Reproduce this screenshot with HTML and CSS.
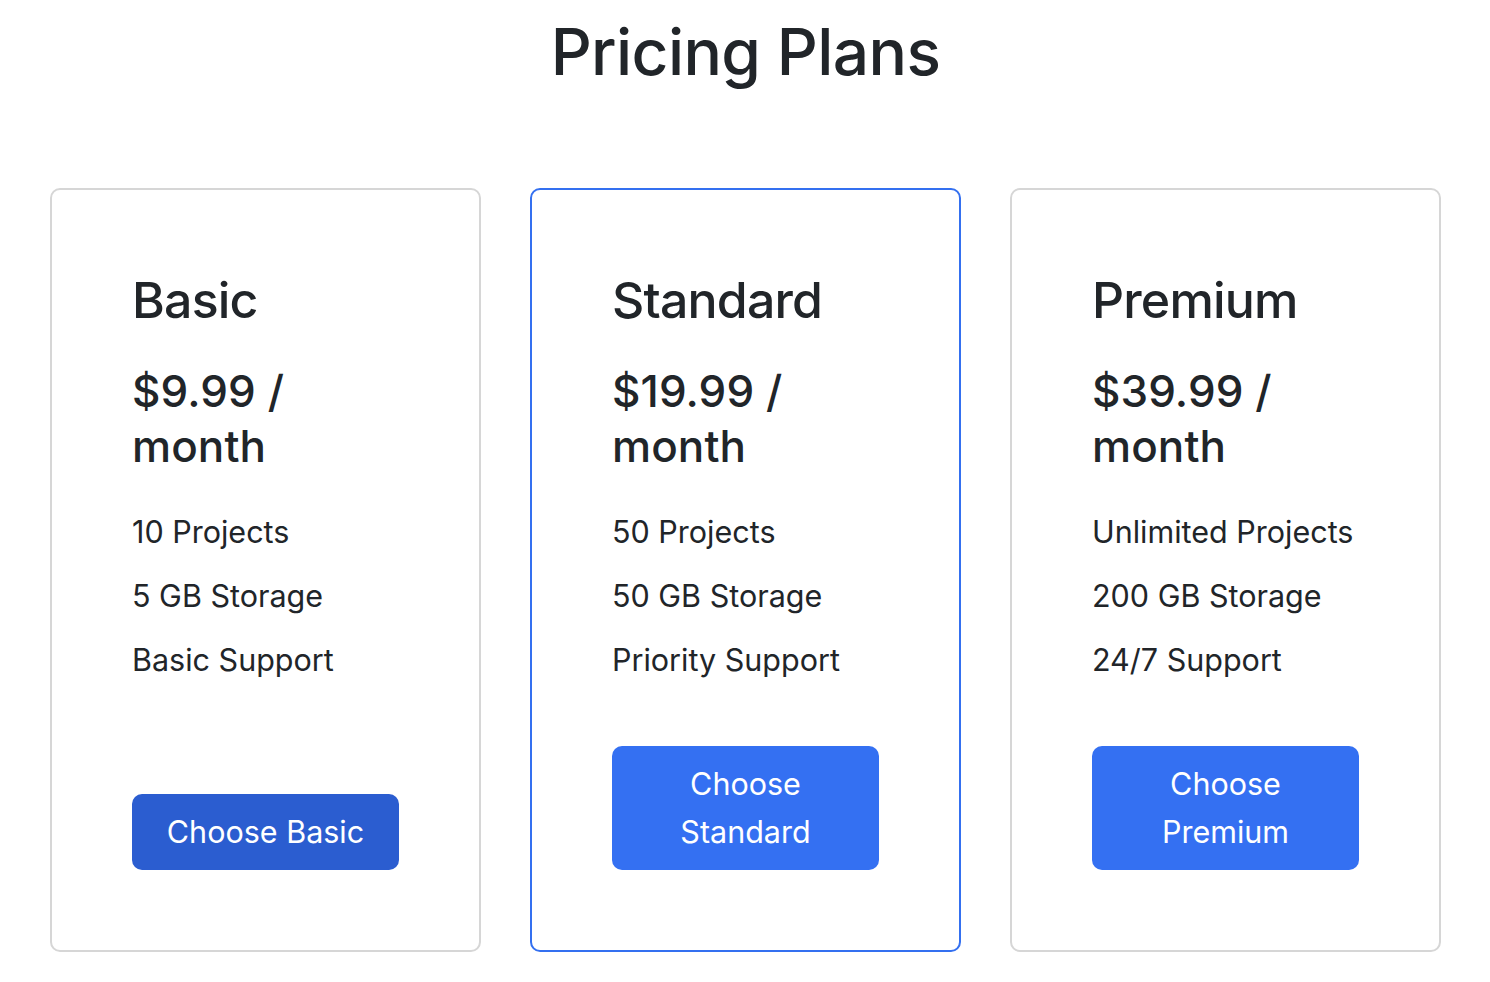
FILE: index.html
```html
<!DOCTYPE html>
<html lang="en">
<head>
<meta charset="utf-8">
<title>Pricing Plans</title>
<link rel="stylesheet" href="styles.css">
</head>
<body>
<main class="page">
  <h1 class="title">Pricing Plans</h1>
  <section class="plans">
    <article class="card">
      <h2 class="plan-name">Basic</h2>
      <p class="price">$9.99 / month</p>
      <ul class="features">
        <li>10 Projects</li>
        <li>5 GB Storage</li>
        <li>Basic Support</li>
      </ul>
      <button class="btn btn-active">Choose Basic</button>
    </article>
    <article class="card card-featured">
      <h2 class="plan-name">Standard</h2>
      <p class="price">$19.99 / month</p>
      <ul class="features">
        <li>50 Projects</li>
        <li>50 GB Storage</li>
        <li>Priority Support</li>
      </ul>
      <button class="btn">Choose Standard</button>
    </article>
    <article class="card">
      <h2 class="plan-name">Premium</h2>
      <p class="price">$39.99 / month</p>
      <ul class="features">
        <li>Unlimited Projects</li>
        <li>200 GB Storage</li>
        <li>24/7 Support</li>
      </ul>
      <button class="btn">Choose Premium</button>
    </article>
  </section>
</main>
</body>
</html>
```
FILE: styles.css
```css
* { box-sizing: border-box; }
html, body { margin: 0; padding: 0; background: #ffffff; }
body {
  font-family: Inter, "Noto Sans", "Liberation Sans", sans-serif;
  color: #212529;
}
.page {
  padding: 0 49px 0 50px;
}
.title {
  margin: 0;
  padding-top: 14px;
  height: 188px;
  text-align: center;
  font-size: 64px;
  font-weight: 500;
  line-height: 1.2;
  letter-spacing: -0.6px;
}
.plans {
  display: flex;
  gap: 49px;
}
.card {
  flex: 1 1 0;
  height: 764px;
  border: 2px solid #d6d6d6;
  border-radius: 10px;
  padding: 80px;
  display: flex;
  flex-direction: column;
  align-items: stretch;
}
.card-featured { border-color: #3470f0; }
.plan-name {
  margin: 0 0 34px;
  font-size: 50px;
  font-weight: 500;
  line-height: 1.2;
  letter-spacing: -0.8px;
}
.price {
  margin: 0 0 36px;
  font-size: 44px;
  font-weight: 500;
  line-height: 55px;
  letter-spacing: 0.1px;
}
.features {
  list-style: none;
  margin: 0;
  padding: 0;
  display: flex;
  flex-direction: column;
  gap: 20px;
}
.features li {
  font-size: 30.5px;
  line-height: 44px;
}
.btn {
  margin-top: auto;
  width: 100%;
  border: 0;
  border-radius: 10px;
  background: #3470f2;
  color: #ffffff;
  font-family: inherit;
  font-size: 30.5px;
  line-height: 48px;
  padding: 14px 20px;
  cursor: pointer;
}
.btn-active { background: #2b5dd0; }
```
